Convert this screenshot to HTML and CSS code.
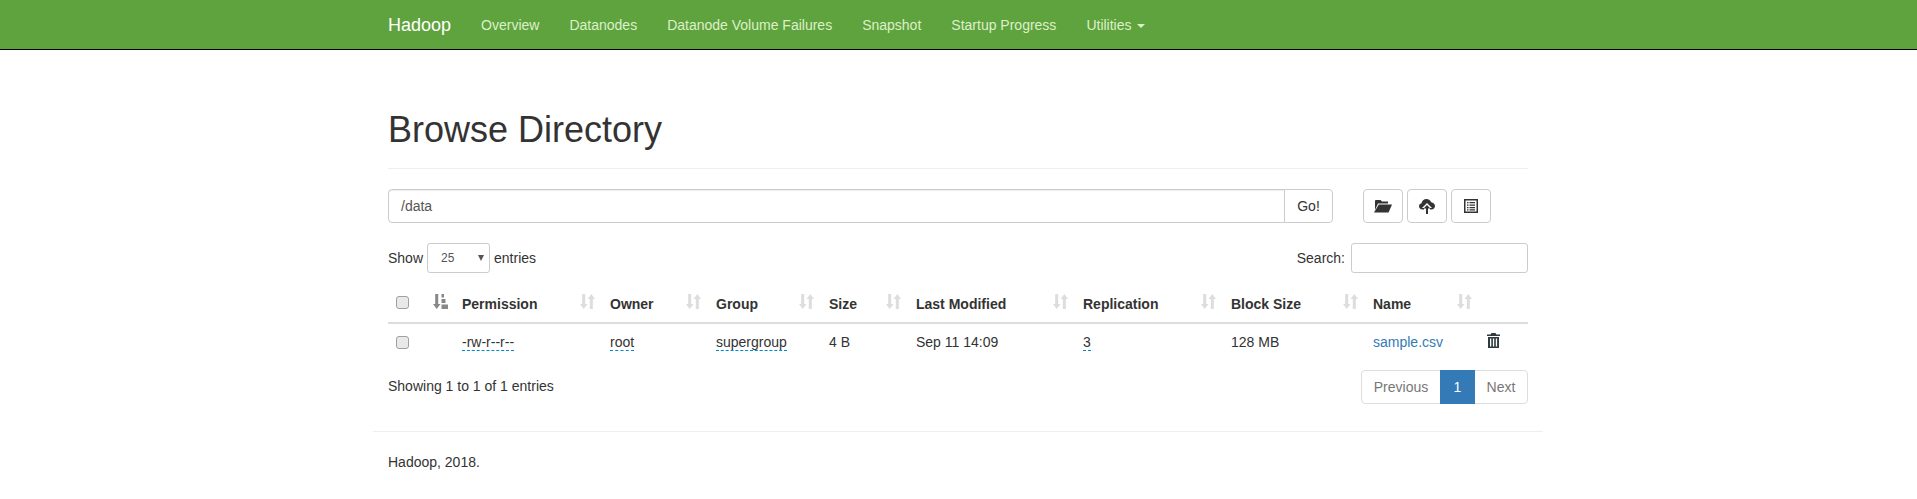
FILE: index.html
```html
<!DOCTYPE html>
<html lang="en">
<head>
<meta charset="utf-8">
<title>Browsing HDFS</title>
<link rel="stylesheet" href="styles.css">
</head>
<body>
<svg class="defs" width="0" height="0" aria-hidden="true">
  <defs>
    <symbol id="sort" viewBox="0 0 15 15">
      <path d="M2.200 0h3v10h2.300L3.700 15 0 10h2.200z"/>
      <path d="M9.800 15h3V5H15L11.300 0 7.500 5h2.300z"/>
    </symbol>
  </defs>
</svg>
<nav class="navbar">
  <div class="nav-inner">
    <a class="brand">Hadoop</a>
    <a class="nav-link">Overview</a>
    <a class="nav-link">Datanodes</a>
    <a class="nav-link">Datanode Volume Failures</a>
    <a class="nav-link">Snapshot</a>
    <a class="nav-link">Startup Progress</a>
    <a class="nav-link">Utilities <span class="caret"></span></a>
  </div>
</nav>
<main class="container">
  <h1 class="page-title">Browse Directory</h1>
  <div class="toolbar">
    <div class="input-group">
      <div class="path-input">/data</div>
      <button class="go-btn">Go!</button>
    </div>
    <div class="tools">
      <button class="icon-btn"><svg width="18" height="14" viewBox="0 0 18 14"><path d="M1.500 1h5l1.500 1.500h6V4.500H4L1 11V2z"/><path d="M4.800 5.500H18l-3.500 8H0z"/></svg></button>
      <button class="icon-btn"><svg width="16" height="15" viewBox="0 0 16 15"><path d="M3.500 10.500C1.500 10.500 0 9 0 7.200 0 5.700 1 4.500 2.500 4.200 3 2 4.800 0 7.500 0c2.200 0 4 1.300 4.700 3.300C14.300 3.500 16 5.100 16 7.100c0 1.900-1.500 3.400-3.500 3.400H11V9h2L8 4 3 9h2v1.500z"/><path d="M8 6l-3.500 3.500H7V15h2V9.500h2.500z"/></svg></button>
      <button class="icon-btn"><svg width="14" height="14" viewBox="0 0 14 14"><path fill-rule="evenodd" d="M0 0h14v14H0zM1.500 1.500v11h11v-11z"/><path d="M3 3h1.500v1.300H3zM5.500 3H11v1.300H5.500zM3 5.500h1.500v1.300H3zM5.500 5.500H11v1.300H5.500zM3 8h1.500v1.300H3zM5.500 8H11v1.300H5.500zM3 10.300h1.500v1.200H3zM5.500 10.300H11v1.200H5.500z"/></svg></button>
    </div>
  </div>
  <div class="table-controls">
    <div class="length">Show <span class="select">25<span class="select-arrow"></span></span> entries</div>
    <div class="search">Search: <span class="search-input"></span></div>
  </div>
  <table class="files">
    <thead>
      <tr>
        <th class="c-check"><span class="checkbox"></span></th>
        <th class="c-sort"><svg class="sorted" width="15" height="15" viewBox="0 0 15 15"><path d="M2.200 0h3v10h2.300L3.700 15 0 10h2.200z"/><path d="M8.500 0h2.500v3.500H8.500zM8.500 5h4v4H8.500zM8.500 10.500H15V15H8.500z"/></svg></th>
        <th class="c-perm">Permission<svg class="sort-icon"><use href="#sort"/></svg></th>
        <th class="c-owner">Owner<svg class="sort-icon"><use href="#sort"/></svg></th>
        <th class="c-group">Group<svg class="sort-icon"><use href="#sort"/></svg></th>
        <th class="c-size">Size<svg class="sort-icon"><use href="#sort"/></svg></th>
        <th class="c-mod">Last Modified<svg class="sort-icon"><use href="#sort"/></svg></th>
        <th class="c-rep">Replication<svg class="sort-icon"><use href="#sort"/></svg></th>
        <th class="c-block">Block Size<svg class="sort-icon"><use href="#sort"/></svg></th>
        <th class="c-name">Name<svg class="sort-icon"><use href="#sort"/></svg></th>
        <th class="c-del"></th>
      </tr>
    </thead>
    <tbody>
      <tr>
        <td><span class="checkbox cell-check"></span></td>
        <td></td>
        <td><span class="dashed">-rw-r--r--</span></td>
        <td><span class="dashed">root</span></td>
        <td><span class="dashed">supergroup</span></td>
        <td>4 B</td>
        <td>Sep 11 14:09</td>
        <td><span class="dashed">3</span></td>
        <td>128 MB</td>
        <td><a class="link">sample.csv</a></td>
        <td><svg class="trash" width="13" height="15" viewBox="0 0 13 15"><path d="M4.500 0h4L9.500 1.500H13V3H0V1.500h3.500z"/><path fill-rule="evenodd" d="M1 4h11v11H1zM3 5.500v8h1.300v-8zM5.900 5.500v8h1.300v-8zM8.800 5.500v8h1.300v-8z"/></svg></td>
      </tr>
    </tbody>
  </table>
  <div class="table-footer">
    <div class="info">Showing 1 to 1 of 1 entries</div>
    <div class="pagination">
      <a class="page first">Previous</a>
      <a class="page current">1</a>
      <a class="page last">Next</a>
    </div>
  </div>
</main>
<footer class="footer">
  <hr class="rule">
  <p class="copyright">Hadoop, 2018.</p>
</footer>
</body>
</html>
```
FILE: styles.css
```css
* { box-sizing: border-box; }
html, body { margin: 0; padding: 0; }
body {
  font-family: "Liberation Sans", Arial, sans-serif;
  font-size: 14px;
  line-height: 20px;
  color: #333;
  background: #fff;
}
.defs { position: absolute; }
.navbar {
  height: 50px;
  background: #5fa33e;
  border-bottom: 1px solid #000;
}
.nav-inner {
  width: 1170px;
  margin-left: 373px;
  padding: 0 15px;
  display: flex;
  align-items: center;
  height: 49px;
}
.brand { color: #fff; font-size: 18px; margin-right: 15px; }
.nav-link { color: #ddf0c8; padding: 0 15px; }
.caret {
  display: inline-block;
  width: 0;
  height: 0;
  margin-left: 2px;
  vertical-align: middle;
  border-top: 4px solid;
  border-left: 4px solid transparent;
  border-right: 4px solid transparent;
}
.container { width: 1170px; margin-left: 373px; padding: 0 15px; }
.page-title {
  font-size: 36px;
  font-weight: 500;
  line-height: 40px;
  margin: 0;
  padding: 60px 0 19px;
  border-bottom: 1px solid #eee;
  height: 119px;
}
.toolbar { display: flex; margin-top: 20px; }
.input-group { display: flex; width: 945px; height: 34px; }
.path-input {
  flex: 1;
  border: 1px solid #ccc;
  border-radius: 4px 0 0 4px;
  padding: 6px 12px;
  color: #555;
  box-shadow: inset 0 1px 1px rgba(0,0,0,.075);
}
.go-btn, .icon-btn {
  font: inherit;
  color: #333;
  background: #fff;
  border: 1px solid #ccc;
  padding: 0;
  height: 34px;
}
.go-btn { width: 49px; margin-left: -1px; border-radius: 0 4px 4px 0; }
.tools { display: flex; gap: 4px; margin-left: 30px; }
.icon-btn {
  width: 40px;
  border-radius: 4px;
  display: flex;
  align-items: center;
  justify-content: center;
}
.icon-btn svg { fill: #333; }
.table-controls {
  display: flex;
  justify-content: space-between;
  align-items: center;
  height: 30px;
  margin-top: 20px;
}
.length, .search { display: flex; align-items: center; gap: 4px; }
.select {
  width: 63px;
  height: 30px;
  border: 1px solid #ccc;
  border-radius: 3px;
  font-size: 12px;
  color: #555;
  padding-left: 13px;
  line-height: 28px;
  position: relative;
}
.select-arrow {
  position: absolute;
  right: 5px;
  top: 11px;
  border-top: 6px solid #555;
  border-left: 3px solid transparent;
  border-right: 3px solid transparent;
}
.search-input {
  display: block;
  width: 177px;
  height: 30px;
  border: 1px solid #ccc;
  border-radius: 3px;
  margin-left: 2px;
}
.files {
  border-collapse: collapse;
  table-layout: fixed;
  width: 1140px;
  margin-top: 13px;
}
.files th {
  position: relative;
  text-align: left;
  font-weight: 700;
  padding: 8px;
  height: 37px;
  border-bottom: 2px solid #ddd;
  vertical-align: bottom;
}
.files td { padding: 8px; height: 37px; vertical-align: top; }
.c-check { width: 35px; }
.c-sort { width: 31px; }
.c-perm { width: 148px; }
.c-owner { width: 106px; }
.c-group { width: 113px; }
.c-size { width: 87px; }
.c-mod { width: 167px; }
.c-rep { width: 148px; }
.c-block { width: 142px; }
.c-name { width: 114px; }
.c-del { width: 49px; }
.checkbox {
  display: block;
  width: 13px;
  height: 13px;
  margin: 0 0 5px;
  border: 1px solid #a0a0a0;
  border-radius: 3px;
  background: #e9e9e9;
}
.cell-check { margin: 4px 0 0; }
.sorted { fill: #888; position: absolute; left: 10px; top: 8px; }
.sort-icon {
  position: absolute;
  right: 7px;
  top: 8px;
  width: 15px;
  height: 15px;
  fill: #ddd;
}
.dashed { border-bottom: 1px dashed #08c; }
.link { color: #337ab7; }
.trash { fill: #2f3b3f; display: block; margin-top: 1px; }
.table-footer {
  display: flex;
  justify-content: space-between;
  margin-top: 10px;
}
.info { padding-top: 6px; }
.pagination { display: flex; height: 34px; }
.page {
  border: 1px solid #ddd;
  padding: 6px 12px;
  color: #777;
  margin-left: -1px;
  text-align: center;
}
.first { border-radius: 4px 0 0 4px; width: 80px; padding: 6px 0; margin-left: 0; }
.last { border-radius: 0 4px 4px 0; width: 54px; padding: 6px 0; }
.current { background: #337ab7; border-color: #337ab7; color: #fff; width: 35px; position: relative; }
.footer { width: 1170px; margin-left: 373px; }
.rule { border: 0; border-top: 1px solid #eee; margin: 27px 0 0; }
.copyright { margin: 20px 15px 0; }
```
